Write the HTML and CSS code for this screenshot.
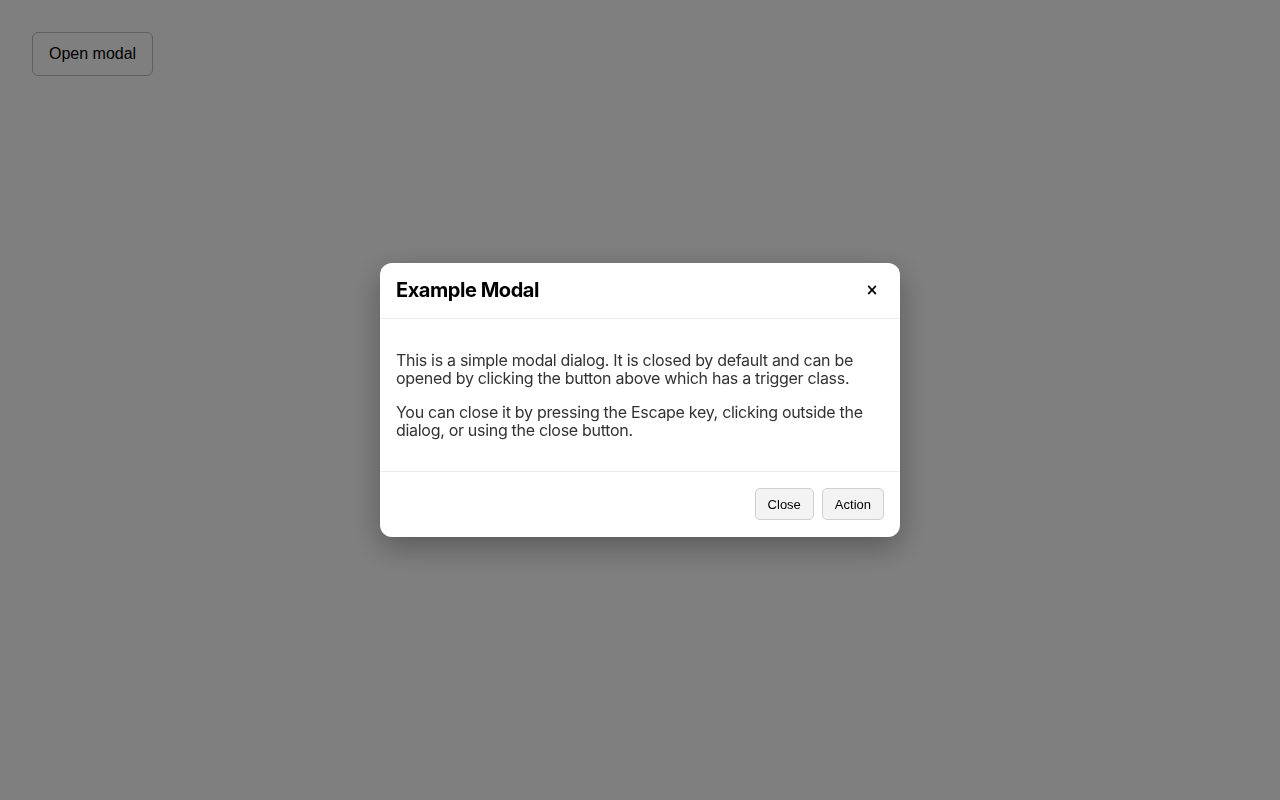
FILE: index.html
```html
<!DOCTYPE html>
<html lang="en">
<head>
  <meta charset="UTF-8">
  <meta name="viewport" content="width=device-width, initial-scale=1.0">
  <title>Modal Demo</title>
  <link rel="stylesheet" href="styles.css">
</head>
<body>
  <button class="trigger">Open modal</button>

  <div class="overlay">
    <div class="modal" role="dialog" aria-labelledby="modal-title">
      <div class="modal-header">
        <h2 id="modal-title">Example Modal</h2>
        <button class="modal-x" aria-label="Close">&times;</button>
      </div>
      <div class="modal-body">
        <p>This is a simple modal dialog. It is closed by default and can be opened by clicking the button above which has a trigger class.</p>
        <p>You can close it by pressing the Escape key, clicking outside the dialog, or using the close button.</p>
      </div>
      <div class="modal-footer">
        <button class="btn">Close</button>
        <button class="btn">Action</button>
      </div>
    </div>
  </div>
</body>
</html>
```

FILE: styles.css
```css
body {
  margin: 0;
  padding: 32px;
  background: #fff;
  font-family: Inter, "Liberation Sans", sans-serif;
}
.trigger {
  font-family: "Liberation Sans", Arial, sans-serif;
  font-size: 16px;
  color: #000;
  background: #fff;
  border: 1px solid #c0c0c0;
  border-radius: 6px;
  padding: 0 16px;
  height: 44px;
  white-space: nowrap;
  cursor: pointer;
}
.overlay {
  position: fixed;
  inset: 0;
  background: rgba(0,0,0,0.5);
  display: flex;
  align-items: center;
  justify-content: center;
}
.modal {
  width: 520px;
  background: #fff;
  border-radius: 12px;
  box-shadow: 0 10px 30px rgba(0,0,0,0.3);
  overflow: hidden;
}
.modal-header {
  display: flex;
  align-items: center;
  justify-content: space-between;
  padding: 16px;
  border-bottom: 1px solid #ececec;
}
.modal-header h2 {
  margin: 0;
  font-size: 20px;
  line-height: 23px;
  font-weight: 700;
  letter-spacing: -0.45px;
  color: #000;
}
.modal-x {
  border: none;
  background: none;
  padding: 0;
  width: 24px;
  height: 23px;
  font-family: "DejaVu Sans", sans-serif;
  font-size: 15px;
  font-weight: 700;
  line-height: 23px;
  color: #000;
  cursor: pointer;
}
.modal-body {
  padding: 16px;
  color: #333;
  font-size: 16px;
  line-height: 18px;
  letter-spacing: -0.3px;
}
.modal-body p {
  margin: 16px 0;
}
.modal-footer {
  display: flex;
  justify-content: flex-end;
  gap: 8px;
  padding: 16px 16px 17px;
  border-top: 1px solid #ececec;
}
.btn {
  font-family: "Liberation Sans", Arial, sans-serif;
  font-size: 13px;
  color: #000;
  background: #f3f3f3;
  border: 1px solid #cfcfcf;
  border-radius: 5px;
  height: 32px;
  padding: 0 12px;
  cursor: pointer;
}
```
